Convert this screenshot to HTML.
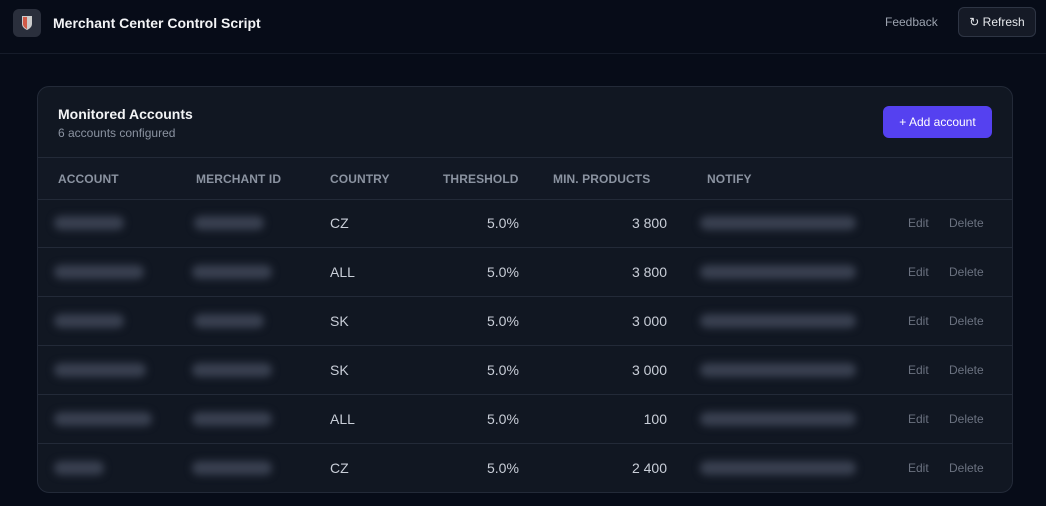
<!DOCTYPE html>
<html><head><style>
body{margin:0;width:1046px;height:506px;background:#070c18;font-family:"Liberation Sans",sans-serif;overflow:hidden;position:relative;color:#e5e7eb}
.top{position:absolute;left:0;top:0;width:1046px;height:53px;border-bottom:1px solid #161c2a}
.logo{position:absolute;left:13px;top:9px;width:28px;height:28px;border-radius:6px;background:#2a2f3c}
.title{position:absolute;left:53px;top:15px;font-size:14px;font-weight:bold;color:#f3f4f6}
.fb{position:absolute;left:885px;top:15px;font-size:12px;color:#9ca3af}
.rf{position:absolute;left:958px;top:7px;width:76px;height:28px;border:1px solid #2e3544;border-radius:6px;background:#151a26;font-size:12px;color:#e5e7eb;text-align:center;line-height:28px}
.card{position:absolute;left:37px;top:86px;width:974px;height:405px;border:1px solid #232a38;border-radius:12px;background:#111722;overflow:hidden}
.h1{position:absolute;left:20px;top:19px;font-size:14px;font-weight:bold;color:#f3f4f6}
.h2{position:absolute;left:20px;top:39px;font-size:12px;color:#8b93a1}
.add{position:absolute;left:845px;top:19px;width:109px;height:32px;border-radius:6px;background:#5541f0;color:#fff;font-size:12px;text-align:center;line-height:32px}
.th{position:absolute;left:0;top:70px;width:974px;height:41px;background:#121824;border-top:1px solid #232a38;border-bottom:1px solid #232a38}
.th span{position:absolute;top:14px;font-size:12px;font-weight:bold;color:#8b93a1;letter-spacing:.1px}
.row{position:absolute;left:0;width:974px;height:48px;border-bottom:1px solid #232a38}
.row span{position:absolute;top:16px;font-size:14px;color:#c9ced8}
.b{position:absolute;background:#394050;filter:blur(4px);border-radius:7px;height:14px;top:17px}
.e{font-size:12px!important;color:#6b7280!important;top:17px!important}
</style></head><body>
<div class="top">
<div class="logo"><svg width="28" height="28"><path d="M9 7h10v8c0 4-5 6-5 6s-5-2-5-6z" fill="#ccc"/><path d="M10 8h4v12c-2-1-4-3-4-5z" fill="#d05a48"/></svg></div>
<div class="title">Merchant Center Control Script</div>
<div class="fb">Feedback</div>
<div class="rf">↻ Refresh</div>
</div>
<div class="card">
<div class="h1">Monitored Accounts</div>
<div class="h2">6 accounts configured</div>
<div class="add">+ Add account</div>
<div class="th"><span style="left:20px">ACCOUNT</span><span style="left:158px">MERCHANT ID</span><span style="left:292px">COUNTRY</span><span style="left:405px">THRESHOLD</span><span style="left:515px">MIN. PRODUCTS</span><span style="left:669px">NOTIFY</span></div>
<div class="row" style="top:112px"><div class="b" style="left:16px;width:70px"></div><div class="b" style="left:156px;width:70px"></div><span style="left:292px">CZ</span><span style="left:449px">5.0%</span><span style="right:345px">3 800</span><div class="b" style="left:662px;width:156px"></div><span class="e" style="left:870px">Edit</span><span class="e" style="left:911px">Delete</span></div>
<div class="row" style="top:161px"><div class="b" style="left:16px;width:90px"></div><div class="b" style="left:154px;width:80px"></div><span style="left:292px">ALL</span><span style="left:449px">5.0%</span><span style="right:345px">3 800</span><div class="b" style="left:662px;width:156px"></div><span class="e" style="left:870px">Edit</span><span class="e" style="left:911px">Delete</span></div>
<div class="row" style="top:210px"><div class="b" style="left:16px;width:70px"></div><div class="b" style="left:156px;width:70px"></div><span style="left:292px">SK</span><span style="left:449px">5.0%</span><span style="right:345px">3 000</span><div class="b" style="left:662px;width:156px"></div><span class="e" style="left:870px">Edit</span><span class="e" style="left:911px">Delete</span></div>
<div class="row" style="top:259px"><div class="b" style="left:16px;width:92px"></div><div class="b" style="left:154px;width:80px"></div><span style="left:292px">SK</span><span style="left:449px">5.0%</span><span style="right:345px">3 000</span><div class="b" style="left:662px;width:156px"></div><span class="e" style="left:870px">Edit</span><span class="e" style="left:911px">Delete</span></div>
<div class="row" style="top:308px"><div class="b" style="left:16px;width:98px"></div><div class="b" style="left:154px;width:80px"></div><span style="left:292px">ALL</span><span style="left:449px">5.0%</span><span style="right:345px">100</span><div class="b" style="left:662px;width:156px"></div><span class="e" style="left:870px">Edit</span><span class="e" style="left:911px">Delete</span></div>
<div class="row" style="top:357px;border:none"><div class="b" style="left:16px;width:50px"></div><div class="b" style="left:154px;width:80px"></div><span style="left:292px">CZ</span><span style="left:449px">5.0%</span><span style="right:345px">2 400</span><div class="b" style="left:662px;width:156px"></div><span class="e" style="left:870px">Edit</span><span class="e" style="left:911px">Delete</span></div>
</div>
</body></html>
